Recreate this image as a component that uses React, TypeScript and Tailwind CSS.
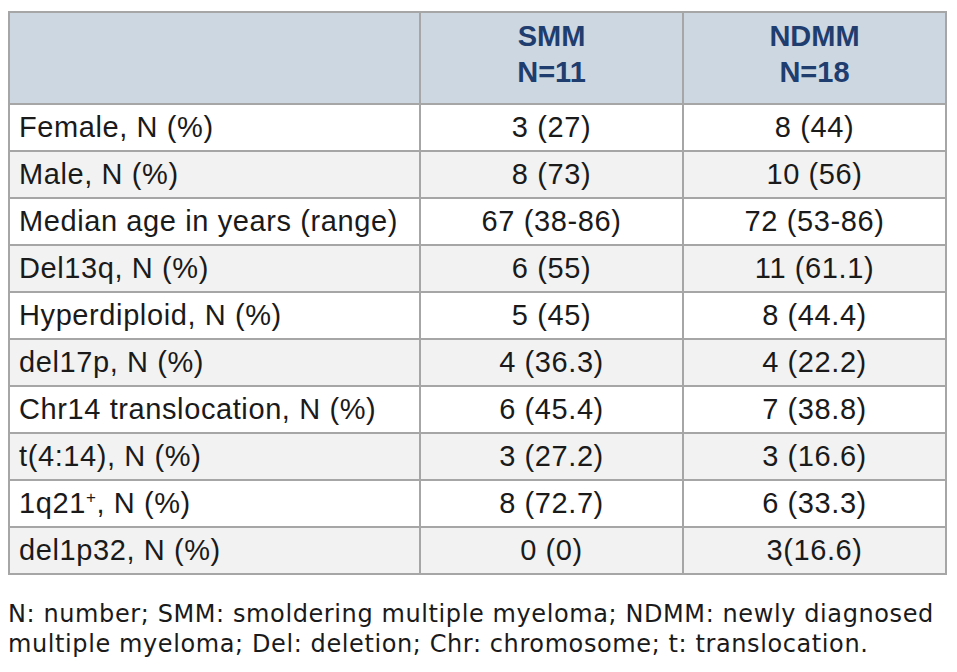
import React from 'react';

const ROWS: [string, string, string][] = [
  ['Female, N (%)', '3 (27)', '8 (44)'],
  ['Male, N (%)', '8 (73)', '10 (56)'],
  ['Median age in years (range)', '67 (38-86)', '72 (53-86)'],
  ['Del13q, N (%)', '6 (55)', '11 (61.1)'],
  ['Hyperdiploid, N (%)', '5 (45)', '8 (44.4)'],
  ['del17p, N (%)', '4 (36.3)', '4 (22.2)'],
  ['Chr14 translocation, N (%)', '6 (45.4)', '7 (38.8)'],
  ['t(4:14), N (%)', '3 (27.2)', '3 (16.6)'],
  ['1q21+, N (%)', '8 (72.7)', '6 (33.3)'],
  ['del1p32, N (%)', '0 (0)', '3(16.6)'],
];

function Label({ text }: { text: string }) {
  // superscript plus on 1q21+
  if (text.startsWith('1q21+')) {
    return (
      <>
        1q21<span className="text-[17px] relative -top-[10px]">+</span>
        {text.slice(5)}
      </>
    );
  }
  return <>{text}</>;
}

export default function App() {
  return (
    <div className="w-[957px] h-[672px] bg-white pt-[11px] pl-[8px]">
      <table
        className="border-collapse text-[#1a1a1a] text-[29px] leading-none tracking-[0.6px]"
        style={{ fontFamily: '"Liberation Sans", Arial, sans-serif' }}
      >
        <colgroup>
          <col className="w-[411px]" />
          <col className="w-[263px]" />
          <col className="w-[263px]" />
        </colgroup>
        <thead>
          <tr className="bg-[#cdd7e1] h-[92px]">
            <th className="border-2 border-[#a6a6a6]" />
            <th className="border-2 border-[#a6a6a6] text-[#1f3d6e] font-bold text-center leading-[36px] pb-[8px] tracking-normal">
              SMM
              <br />
              N=11
            </th>
            <th className="border-2 border-[#a6a6a6] text-[#1f3d6e] font-bold text-center leading-[36px] pb-[8px] tracking-normal">
              NDMM
              <br />
              N=18
            </th>
          </tr>
        </thead>
        <tbody>
          {ROWS.map(([label, smm, ndmm], i) => (
            <tr key={label} className={`h-[47px] ${i % 2 === 1 ? 'bg-[#f2f2f2]' : 'bg-white'}`}>
              <td className="border-2 border-[#a6a6a6] pl-[9px] text-left whitespace-nowrap">
                <Label text={label} />
              </td>
              <td className="border-2 border-[#a6a6a6] text-center">{smm}</td>
              <td className="border-2 border-[#a6a6a6] text-center">{ndmm}</td>
            </tr>
          ))}
        </tbody>
      </table>

      <p
        className="mt-[24px] text-[24px] leading-[30px] text-[#1a1a1a] whitespace-nowrap tracking-[0.6px]"
        style={{ fontFamily: '"DejaVu Sans", sans-serif' }}
      >
        N: number; SMM: smoldering multiple myeloma; NDMM: newly diagnosed
        <br />
        multiple myeloma; Del: deletion; Chr: chromosome; t: translocation.
      </p>
    </div>
  );
}
